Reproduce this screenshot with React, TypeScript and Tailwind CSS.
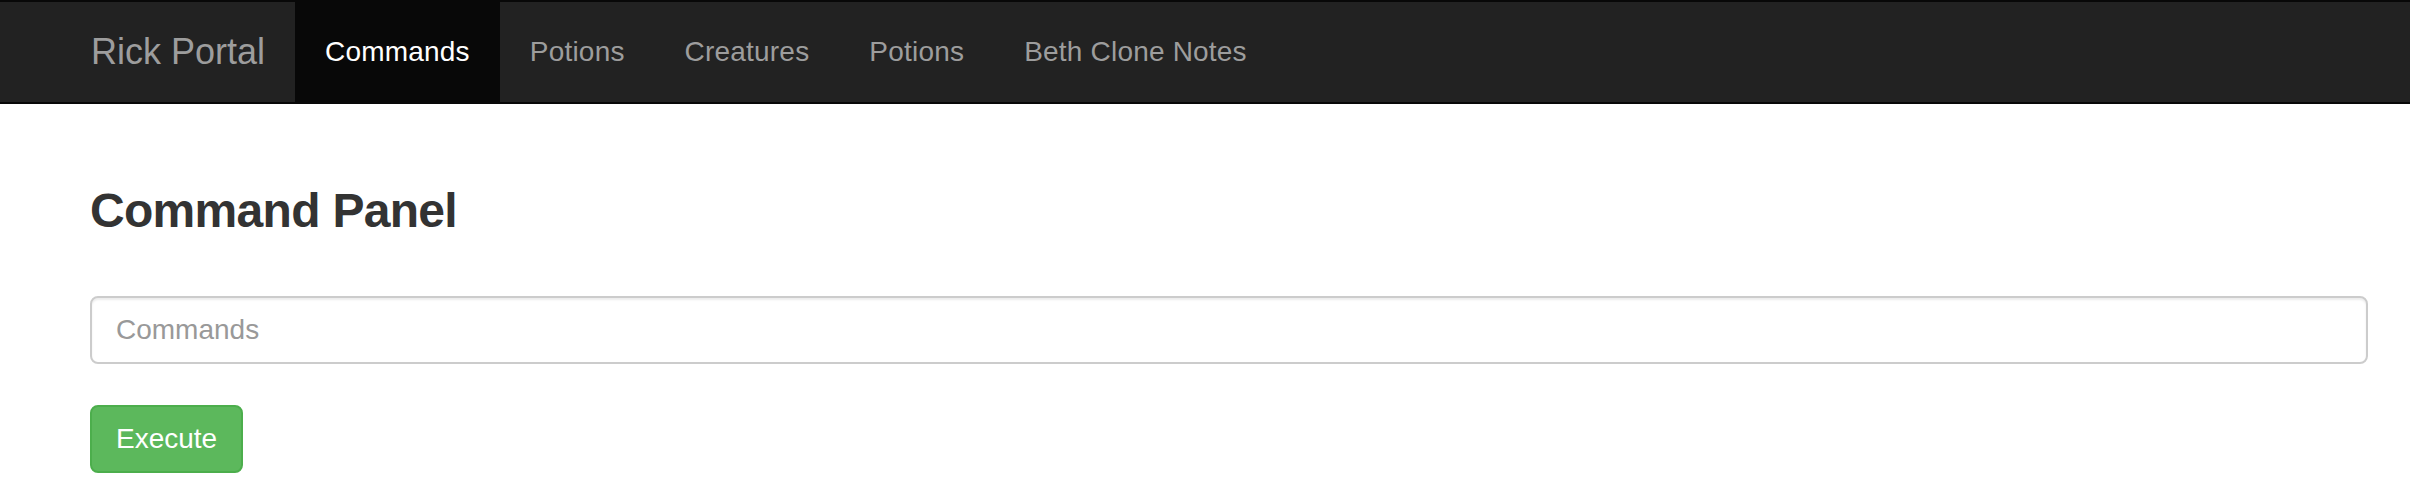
const NAV_ITEMS = [
  { label: "Commands", active: true },
  { label: "Potions" },
  { label: "Creatures" },
  { label: "Potions" },
  { label: "Beth Clone Notes" },
];

export default function App() {
  return (
    <div className="min-h-[492px] bg-white font-['Liberation_Sans',Arial,sans-serif]">
      {/* Navbar */}
      <nav className="h-[104px] bg-[#222] border-y-2 border-[#080808] flex pl-[61px]">
        <a href="#" className="flex items-center px-[30px] text-[36px] leading-[40px] text-[#9d9d9d]">
          Rick Portal
        </a>
        <ul className="flex">
          {NAV_ITEMS.map((item, i) => (
            <li key={i} className="flex">
              <a
                href="#"
                className={
                  item.active
                    ? "flex items-center px-[30px] text-[28px] leading-[40px] tracking-[0.2px] text-white bg-[#080808]"
                    : "flex items-center px-[30px] text-[28px] leading-[40px] tracking-[0.2px] text-[#9d9d9d]"
                }
              >
                {item.label}
              </a>
            </li>
          ))}
        </ul>
      </nav>

      {/* Content */}
      <div className="pl-[90px] pr-[42px] pt-[80px]">
        <h3 className="text-[48px] leading-[53px] font-bold tracking-[-0.7px] text-[#333]">Command Panel</h3>
        <input
          type="text"
          placeholder="Commands"
          className="mt-[59px] block w-full h-[68px] border-2 border-[#ccc] rounded-[8px] px-[24px] text-[28px] text-[#555] placeholder:text-[#999] shadow-[inset_0_2px_2px_rgba(0,0,0,0.075)] outline-none"
        />
        <button className="mt-[41px] h-[68px] px-[24px] bg-[#5cb85c] border-2 border-[#4cae4c] rounded-[8px] text-white text-[28px] leading-[40px]">
          Execute
        </button>
      </div>
    </div>
  );
}
